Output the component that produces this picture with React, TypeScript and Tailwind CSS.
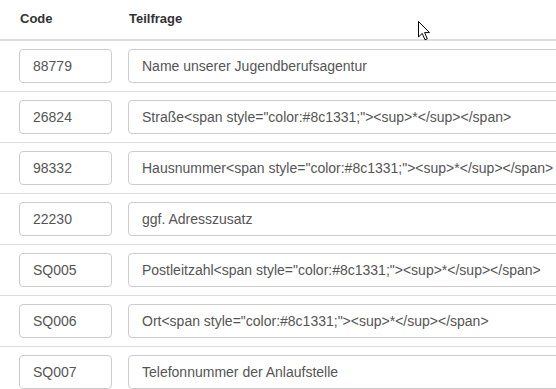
const rows = [
  { code: "88779", text: "Name unserer Jugendberufsagentur" },
  { code: "26824", text: 'Straße<span style="color:#8c1331;"><sup>*</sup></span>' },
  { code: "98332", text: 'Hausnummer<span style="color:#8c1331;"><sup>*</sup></span>' },
  { code: "22230", text: "ggf. Adresszusatz" },
  { code: "SQ005", text: 'Postleitzahl<span style="color:#8c1331;"><sup>*</sup></span>' },
  { code: "SQ006", text: 'Ort<span style="color:#8c1331;"><sup>*</sup></span>' },
  { code: "SQ007", text: "Telefonnummer der Anlaufstelle" },
];

function Cursor() {
  return (
    <svg className="absolute left-[418px] top-[21px]" width="13" height="20" viewBox="0 0 13 20">
      <path
        d="M0.5 0.5 L0.5 16 L4.2 12.4 L7 18.8 L9.3 17.8 L6.6 11.6 L11.5 11.6 Z"
        fill="#fff"
        stroke="#000"
        strokeWidth="1"
        strokeLinejoin="miter"
      />
    </svg>
  );
}

export default function App() {
  return (
    <div
      className="relative w-[556px] h-[389px] overflow-hidden bg-white text-[14px] text-[#333]"
      style={{ fontFamily: '"Liberation Sans", Arial, sans-serif' }}
    >
      {/* Header */}
      <div className="flex h-[41px] items-center border-b-2 border-[#ddd] pb-[1px] text-[13px] font-bold">
        <div className="w-[129px] pl-[20px]">Code</div>
        <div>Teilfrage</div>
      </div>

      {/* Rows */}
      {rows.map((r, i) => (
        <div
          key={r.code}
          className={`flex gap-[16px] py-[8px] pl-[19px] ${i > 0 ? "border-t border-[#ddd]" : ""}`}
        >
          <div className="flex h-[34px] w-[93px] shrink-0 items-center rounded-[4px] border border-[#ccc] px-[13px] text-[#555]">
            {r.code}
          </div>
          <div className="flex h-[34px] w-[460px] shrink-0 items-center whitespace-nowrap rounded-[4px] border border-[#ccc] px-[13px] text-[#555]">
            {r.text}
          </div>
        </div>
      ))}

      <Cursor />
    </div>
  );
}
